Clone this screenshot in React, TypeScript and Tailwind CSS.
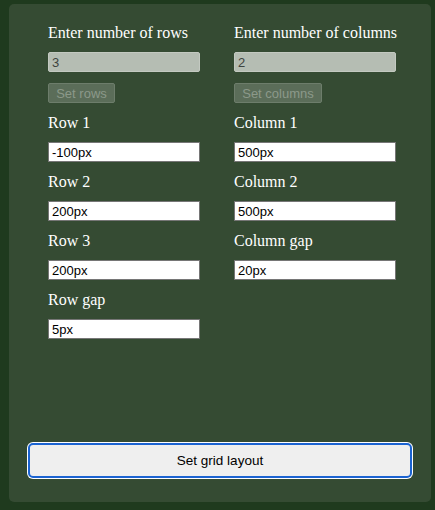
import React, { useState } from 'react';

const serif = { fontFamily: '"Liberation Serif", "Times New Roman", serif' };
const sans = { fontFamily: '"Liberation Sans", Arial, sans-serif' };

// Campo de texto con su etiqueta (mismo patrón para filas y columnas)
const Field: React.FC<{
    label: string;
    value: string;
    width: string;
    onChange: (v: string) => void;
}> = ({ label, value, width, onChange }) => (
    <div className="flex flex-col">
        <label className="block h-[18px] text-[16px] leading-[18px] text-white mb-[10px]" style={serif}>
            {label}
        </label>
        <input
            value={value}
            onChange={(e) => onChange(e.target.value)}
            className={`${width} h-[20px] bg-white border border-[#767676] px-[3px] text-[13px] text-black outline-none mb-[11px]`}
            style={sans}
        />
    </div>
);

const CountBlock: React.FC<{
    label: string;
    value: string;
    button: string;
    width: string;
    buttonWidth: string;
}> = ({ label, value, button, width, buttonWidth }) => (
    <div className="flex flex-col">
        <label className="block h-[18px] text-[16px] leading-[18px] text-white mb-[10px]" style={serif}>
            {label}
        </label>
        <input
            disabled
            value={value}
            readOnly
            className={`${width} h-[20px] bg-[#b5bdb3] border border-[#c3c9c1] rounded-[2px] px-[3px] text-[13px] text-[#3f443f] mb-[11px]`}
            style={sans}
        />
        <button
            disabled
            className={`${buttonWidth} h-[20px] bg-[#5b6d59] border border-[#6d7d6b] rounded-[2px] text-[13px] text-[#8c998a] leading-none mb-[11px]`}
            style={sans}
        >
            {button}
        </button>
    </div>
);

export default function App() {
    const [rows, setRows] = useState(['-100px', '200px', '200px']);
    const [cols, setCols] = useState(['500px', '500px']);
    const [rowGap, setRowGap] = useState('5px');
    const [colGap, setColGap] = useState('20px');

    return (
        <div className="w-[435px] h-[510px] bg-[#1f3a1e] pt-[4px] pl-[9px] pr-[4px] pb-[8px]">
            <div className="h-full bg-[#354b33] rounded-[5px] flex flex-col">
                <div className="grid grid-cols-[186px_1fr] pl-[39px] pt-[20px]">
                    <div className="flex flex-col">
                        <CountBlock label="Enter number of rows" value="3" button="Set rows" width="w-[152px]" buttonWidth="w-[67px]" />
                        {rows.map((r, i) => (
                            <Field
                                key={i}
                                label={`Row ${i + 1}`}
                                value={r}
                                width="w-[152px]"
                                onChange={(v) => setRows(rows.map((x, j) => (j === i ? v : x)))}
                            />
                        ))}
                        <Field label="Row gap" value={rowGap} width="w-[152px]" onChange={setRowGap} />
                    </div>
                    <div className="flex flex-col">
                        <CountBlock label="Enter number of columns" value="2" button="Set columns" width="w-[162px]" buttonWidth="w-[88px]" />
                        {cols.map((c, i) => (
                            <Field
                                key={i}
                                label={`Column ${i + 1}`}
                                value={c}
                                width="w-[162px]"
                                onChange={(v) => setCols(cols.map((x, j) => (j === i ? v : x)))}
                            />
                        ))}
                        <Field label="Column gap" value={colGap} width="w-[162px]" onChange={setColGap} />
                    </div>
                </div>
                <div className="flex-1" />
                <div className="px-[19px] pb-[24px]">
                    <button
                        className="w-full h-[35px] bg-[#efefef] border-2 border-[#1b63d1] rounded-[5px] shadow-[0_0_0_1px_#ffffff] text-[13.5px] text-black pt-[2px]"
                        style={sans}
                    >
                        Set grid layout
                    </button>
                </div>
            </div>
        </div>
    );
}
